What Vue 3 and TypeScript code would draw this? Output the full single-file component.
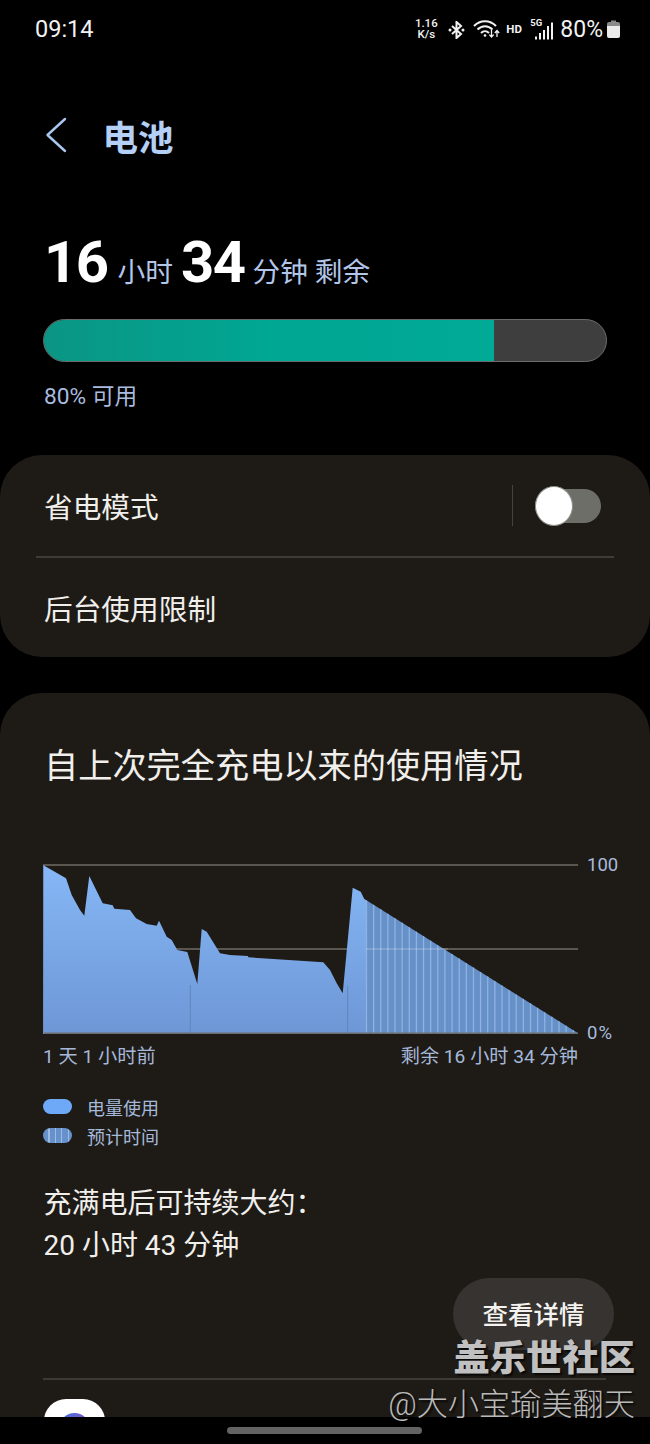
<script setup lang="ts">
// Battery discharge history, in chart units (x: 0-535, y: 0-170 from the top)
const history: [number, number][] = [
  [0.3, 1.3], [8.7, 6], [23, 14.3], [28.7, 31], [37, 46], [41.3, 51.7], [46.3, 12],
  [59.7, 39.3], [69.7, 41.3], [71.3, 44.7], [87, 46], [93, 54.3], [103.7, 60], [113.7, 61.7],
  [116, 56.7], [123.7, 72.7], [128.7, 76], [134.3, 86], [144.3, 88], [154.3, 120], [158.7, 65],
  [163.7, 67.7], [177, 89.3], [187, 91], [205, 92], [205.3, 93.3], [280.3, 98.3], [287, 106],
  [293.7, 119.3], [299.7, 129.3], [309.7, 23.7], [317.7, 27.7], [321.3, 35],
]
const baseY = 169
const endX = 534.7
const startProjected: [number, number] = [321.3, 35]

const projectedY = (x: number): number =>
  startProjected[1] + ((x - startProjected[0]) * (baseY - startProjected[1])) / (endX - startProjected[0])

const toPoints = (pts: [number, number][]): string => pts.map(([x, y]) => `${x},${y}`).join(' ')

const usedArea = toPoints([[0.3, baseY], ...history, [323, projectedY(323)], [323, baseY]])
const projectedArea = toPoints([[323, projectedY(323)], [endX, baseY], [323, baseY]])

const stripes = Array.from({ length: 30 }, (_, i) => {
  const x = 323.5 + i * 7.13
  return { x, y: projectedY(x) }
})
</script>

<template>
  <div class="screen">
    <div class="status">
      <span class="clock">09:14</span>
      <div class="status-right">
        <span class="speed"><span>1.16</span><span>K/s</span></span>
        <svg class="ic-bt" width="17" height="18" viewBox="0 0 17 18">
          <path d="M4 5 L13 13 L8.5 17 V1 L13 5 L4 13" fill="none" stroke="#f2f2f2" stroke-width="2" />
          <circle cx="2" cy="9" r="1.5" fill="#f2f2f2" />
          <circle cx="15" cy="9" r="1.5" fill="#f2f2f2" />
        </svg>
        <svg class="ic-wifi" width="28" height="20" viewBox="0 0 28 20">
          <path d="M1 7 C7 0.5 17 0.5 23 7" fill="none" stroke="#f2f2f2" stroke-width="2" />
          <path d="M4.5 10.5 C9 6 15 6 19.5 10.5" fill="none" stroke="#f2f2f2" stroke-width="2" />
          <path d="M8 14 C10.5 11.5 13.5 11.5 16 14" fill="none" stroke="#f2f2f2" stroke-width="2" />
          <circle cx="12" cy="16.5" r="1.3" fill="#f2f2f2" />
          <path d="M18.5 11 V18 M16.3 15.6 L18.5 18 L20.7 15.6" fill="none" stroke="#f2f2f2" stroke-width="1.3" />
          <path d="M24 18 V11.5 M21.8 14 L24 11.5 L26.2 14" fill="none" stroke="#f2f2f2" stroke-width="1.3" />
        </svg>
        <span class="hd">HD</span>
        <span class="net">
          <span class="five-g">5G</span>
          <svg width="18" height="18" viewBox="0 0 18 18">
            <rect x="0" y="14.5" width="2" height="3" fill="#f2f2f2" />
            <rect x="4" y="11" width="2" height="6.5" fill="#f2f2f2" />
            <rect x="8" y="8" width="2" height="9.5" fill="#f2f2f2" />
            <rect x="12" y="4" width="2" height="13.5" fill="#f2f2f2" />
            <rect x="16" y="0.5" width="2" height="17" fill="#f2f2f2" />
          </svg>
        </span>
        <span class="pct">80%</span>
        <svg width="13" height="18" viewBox="0 0 13 18">
          <path d="M4 0.5 H9 V2 H11 A2 2 0 0 1 13 4 V6 H0 V4 A2 2 0 0 1 2 2 H4 Z" fill="#8a8a8a" />
          <path d="M0 6 H13 V16 A2 2 0 0 1 11 18 H2 A2 2 0 0 1 0 16 Z" fill="#ececec" />
        </svg>
      </div>
    </div>

    <main class="content">
      <header class="title-bar">
        <svg class="back" width="22" height="36" viewBox="0 0 22 36">
          <path d="M20 2 L2.5 18 L20 34" fill="none" stroke="#a9c7f0" stroke-width="2.4" stroke-linecap="round" stroke-linejoin="round" />
        </svg>
        <h1>电池</h1>
      </header>

      <section class="summary">
        <div class="remaining">
          <b>16</b><span class="unit first">小时</span><b>34</b><span class="unit">分钟 剩余</span>
        </div>
        <div class="level">
          <div class="level-fill" :style="{ width: '80%' }"></div>
        </div>
        <div class="available">80% 可用</div>
      </section>

      <section class="card settings">
        <div class="row saver">
          <span>省电模式</span>
          <div class="toggle-wrap">
            <div class="toggle"><div class="thumb"></div></div>
          </div>
        </div>
        <div class="divider"></div>
        <div class="row second">后台使用限制</div>
      </section>

      <section class="card usage">
        <h2>自上次完全充电以来的使用情况</h2>

        <div class="chart">
          <svg width="536" height="170" viewBox="0 0 536 170">
            <defs>
              <linearGradient id="used" x1="0" y1="0" x2="0" y2="1">
                <stop offset="0" stop-color="#86b7f6" />
                <stop offset="1" stop-color="#6e97d6" />
              </linearGradient>
            </defs>
            <line x1="0" x2="535" y1="1" y2="1" stroke="#6f6b64" stroke-width="1.6" />
            <line x1="0" x2="535" y1="85" y2="85" stroke="#6f6b64" stroke-width="1.6" />
            <polygon :points="usedArea" fill="url(#used)" />
            <polygon :points="projectedArea" fill="#6690c8" />
            <line v-for="s in stripes" :key="s.x" :x1="s.x" :x2="s.x" :y1="s.y" :y2="baseY" stroke="#8fb2e0" stroke-width="1.3" />
            <line x1="323" x2="405" y1="85" y2="85" stroke="#ffffff" stroke-opacity="0.22" stroke-width="1.4" />
            <line x1="147.3" x2="147.3" y1="121" :y2="baseY" stroke="#5f86bd" stroke-width="1" />
            <line x1="304.7" x2="304.7" y1="122" :y2="baseY" stroke="#5f86bd" stroke-width="1" />
            <line x1="0" x2="535" y1="169.2" y2="169.2" stroke="#6c6c6c" stroke-width="1.6" />
            <line x1="0.5" x2="0.5" y1="1" y2="170" stroke="#6f8fbd" stroke-width="1" />
          </svg>
          <div class="axis">
            <span>100</span>
            <span class="zero">0%</span>
          </div>
        </div>
        <div class="range">
          <span>1 天 1 小时前</span>
          <span>剩余 16 小时 34 分钟</span>
        </div>

        <ul class="legend">
          <li><i class="pill solid"></i>电量使用</li>
          <li><i class="pill hatched"></i>预计时间</li>
        </ul>

        <p class="estimate">充满电后可持续大约：<br />20 小时 43 分钟</p>

        <div class="actions"><button type="button">查看详情</button></div>
        <div class="divider wide"></div>

        <div class="app-icon"><div class="app-dot"></div></div>
      </section>
    </main>

    <footer class="nav"><div class="handle"></div></footer>

    <div class="mark">
      <div class="mark-title">盖乐世社区</div>
      <div class="mark-user">@大小宝瑜美翻天</div>
    </div>
  </div>
</template>

<style>
html, body { margin: 0; background: #000; }
</style>

<style scoped>
.screen {
  position: relative;
  width: 650px;
  height: 1444px;
  display: flex;
  flex-direction: column;
  overflow: hidden;
  background: #000;
  font-family: Roboto, "Noto Sans CJK SC", sans-serif;
  color: #f1efeb;
}
.status {
  flex: none;
  height: 58px;
  padding: 0 30px 0 35px;
  display: flex;
  align-items: center;
  justify-content: space-between;
}
.clock { font-size: 23.5px; color: #f2f2f2; }
.status-right { display: flex; align-items: center; height: 58px; }
.speed {
  display: flex;
  flex-direction: column;
  align-items: center;
  width: 24px;
  font-size: 11.5px;
  line-height: 11.5px;
  font-weight: 500;
  color: #f2f2f2;
}
.ic-bt { margin-left: 10px; margin-top: 2px; }
.ic-wifi { margin-left: 8px; margin-top: -1px; }
.hd { margin-left: 5px; font-size: 11.5px; font-weight: 700; color: #f2f2f2; width: 16px; }
.net { position: relative; margin-left: 13px; display: flex; margin-top: 3px; }
.five-g {
  position: absolute;
  left: -5px;
  top: -5px;
  font-size: 9.5px;
  line-height: 11px;
  font-weight: 700;
  color: #f2f2f2;
}
.pct { margin: 0 4px 0 7px; font-size: 23px; color: #f2f2f2; }
.content { flex: 1; min-height: 0; display: flex; flex-direction: column; overflow: hidden; }
.title-bar {
  flex: none;
  box-sizing: border-box;
  height: 158px;
  display: flex;
  align-items: center;
  padding: 0 0 4px 45px;
}
.back { flex: none; }
h1 {
  margin: 0 0 0 35.5px;
  font-size: 35.5px;
  font-weight: 700;
  color: #b4d0f6;
}
.summary { flex: none; padding: 0 44px; height: 239px; }
.remaining {
  height: 103px;
  display: flex;
  align-items: baseline;
  color: #b3c6e8;
  font-size: 27.7px;
  line-height: 92px;
}
.remaining b {
  font-size: 58px;
  font-weight: 700;
  color: #fff;
  letter-spacing: -1.5px;
}
.remaining .unit { margin-left: 8px; padding-top: 1px; }
.remaining .first { margin-left: 10px; margin-right: 8px; }
.level {
  box-sizing: border-box;
  width: 564px;
  margin-left: -1px;
  height: 43px;
  border: 1px solid #6c6c6a;
  border-radius: 22px;
  background: #3e3e3e;
  overflow: hidden;
}
.level-fill {
  height: 100%;
  background: linear-gradient(90deg, #0b9584 0%, #00a793 50%, #00aa96 100%);
}
.available {
  margin-top: 21px;
  font-size: 22.7px;
  line-height: 28px;
  color: #a9bbdf;
}
.card { background: #1e1b17; border-radius: 42px; flex: none; }
.settings { height: 202px; margin-bottom: 36px; }
.row {
  height: 101px;
  box-sizing: border-box;
  padding: 0 44px;
  display: flex;
  align-items: center;
  font-size: 28.7px;
}
.second { padding-bottom: 3px; }
.saver { justify-content: space-between; padding-right: 49px; }
.toggle-wrap {
  display: flex;
  align-items: center;
  height: 41px;
  padding-left: 22px;
  border-left: 1px solid #46433f;
}
.toggle {
  position: relative;
  width: 66px;
  height: 34px;
  border-radius: 17px;
  background: #6e6e69;
}
.thumb {
  position: absolute;
  left: 0;
  top: -3px;
  width: 38px;
  height: 40px;
  box-sizing: border-box;
  border-radius: 50%;
  background: #fff;
  border: 1.5px solid #8d8d88;
}
.divider { height: 2px; margin: 0 36px; background: #3f3c38; }
.usage { flex: 1; min-height: 0; overflow: hidden; border-radius: 42px 42px 0 0; padding: 0 44px 0 43px; }
h2 {
  margin: 49px 0 0 1px;
  font-size: 34.2px;
  line-height: 48px;
  font-weight: 400;
  color: #f1efeb;
}
.chart { margin-top: 74px; display: flex; align-items: stretch; }
.chart svg { flex: none; display: block; }
.axis {
  width: 40px;
  margin-left: 8px;
  margin-top: -10px;
  margin-bottom: -10px;
  display: flex;
  flex-direction: column;
  justify-content: space-between;
  font-size: 18.5px;
  line-height: 22px;
  color: #a9bbdf;
}
.zero { letter-spacing: 1px; }
.range {
  width: 535px;
  margin-top: 10px;
  display: flex;
  justify-content: space-between;
  font-size: 19.2px;
  line-height: 26px;
  color: #a5b8d8;
}
.legend { list-style: none; margin: 22px 0 0; padding: 0; }
.legend li {
  height: 29px;
  display: flex;
  align-items: center;
  font-size: 18px;
  color: #a5b9da;
}
.pill { width: 29px; height: 15px; border-radius: 8px; margin-right: 15px; flex: none; }
.solid { background: #6ea9f8; }
.hatched {
  background: repeating-linear-gradient(90deg, #6691cb 0 5px, #9dbce6 5px 6.5px);
}
.estimate {
  margin: 33px 0 0 0.5px;
  font-size: 28px;
  line-height: 42px;
  color: #f1efeb;
}
.actions { display: flex; justify-content: flex-end; margin-top: 11px; margin-right: -8px; }
button {
  width: 161px;
  height: 72px;
  padding: 0 0 4px;
  border: 0;
  border-radius: 36px;
  background: #363330;
  color: #f5f3ef;
  font: 500 25.5px Roboto, "Noto Sans CJK SC", sans-serif;
}
.wide { margin: 28px 0 0; width: 563px; height: 2px; background: #3d3a36; }
.app-icon {
  position: relative;
  width: 61px;
  height: 61px;
  margin: 19px 0 0 1px;
  border-radius: 22px;
  background: #fff;
  overflow: hidden;
}
.app-dot {
  position: absolute;
  left: 15px;
  top: 14px;
  width: 31px;
  height: 31px;
  border-radius: 50%;
  background: linear-gradient(120deg, #3f6fd8, #9a52c8);
}
.nav {
  position: relative;
  flex: none;
  height: 27px;
  background: #000;
  display: flex;
  justify-content: center;
  padding-top: 10px;
  box-sizing: border-box;
}
.handle { width: 195px; height: 7px; border-radius: 4px; background: #636363; margin-left: -1px; }
.mark {
  position: absolute;
  right: 15px;
  bottom: 21px;
  text-align: right;
  color: #c0c0c0;
  text-shadow: 2px 2px 2px rgba(0, 0, 0, 0.75);
}
.mark-title { font-size: 36.3px; line-height: 44px; font-weight: 900; margin-bottom: 6px; }
.mark-user { font-size: 31.2px; line-height: 36px; color: #b9b9b9; font-weight: 300; }
</style>
